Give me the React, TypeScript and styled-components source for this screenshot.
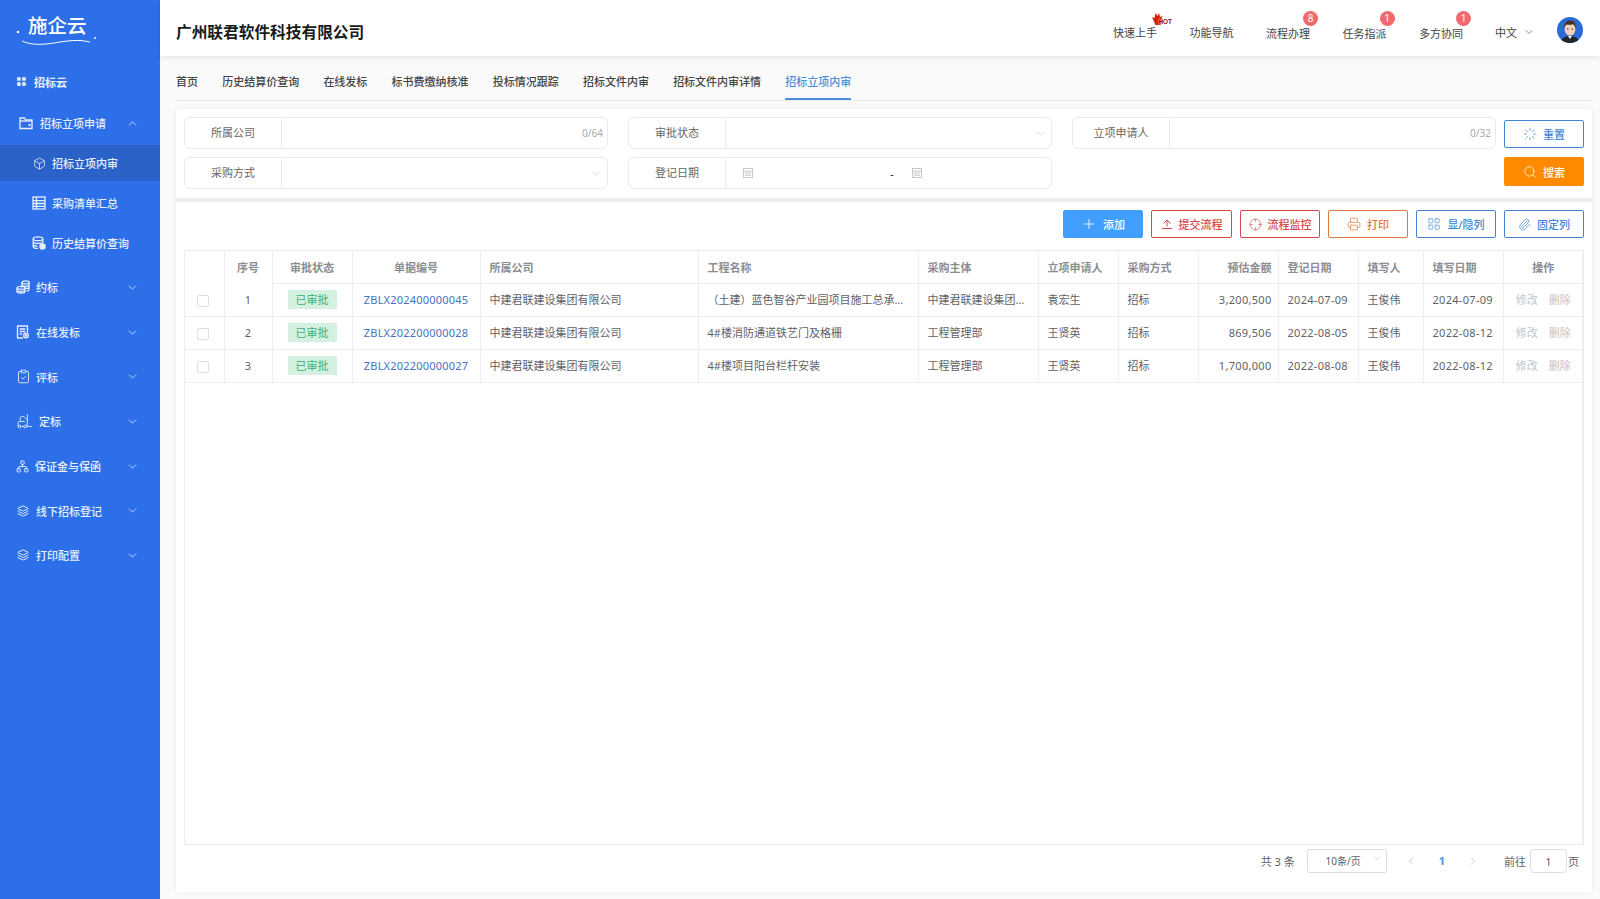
import * as React from 'react'
import styled, { createGlobalStyle } from 'styled-components'
import {
  Box,
  ChevronDown,
  ChevronLeft,
  ChevronRight,
  ChevronUp,
  ClipboardCheck,
  Crosshair,
  Forklift,
  Layers,
  LayoutGrid,
  Loader,
  Network,
  Paperclip,
  Plus,
  Printer,
  Search,
} from 'lucide-react'

const fontStack = `"Noto Sans", "Noto Sans CJK SC", sans-serif`

const GlobalStyle = createGlobalStyle`
  html, body {
    margin: 0;
    padding: 0;
    height: 100%;
    overflow: hidden;
    background: #fafafa;
    font-family: ${fontStack};
    font-size: 11px;
  }
  * { box-sizing: border-box; }
`

const Page = styled.div`
  display: flex;
  width: 1600px;
  height: 899px;
`

/* sidebar */

const Sidebar = styled.aside`
  flex: 0 0 160px;
  background: #2c6fe8;
  color: #e9f0fd;
`

const LogoBox = styled.div`
  height: 60px;
  padding: 14px 0 0 15px;
`

const MenuRow = styled.div<{ $height: number; $pad: number; $gap: number; $active?: boolean; $bold?: boolean }>`
  display: flex;
  align-items: center;
  height: ${p => p.$height}px;
  padding-left: ${p => p.$pad}px;
  padding-right: 21px;
  gap: ${p => p.$gap}px;
  font-weight: ${p => (p.$bold ? 700 : 500)};
  background: ${p => (p.$active ? '#2a62c8' : 'transparent')};
`

const ActiveWrap = styled.div`
  height: 40px;
  padding: 2px 0;
`

const MenuText = styled.span`
  flex: 1;
  white-space: nowrap;
`

const GroupList = styled.div`
  padding-top: 2px;
`

const stroke = { fill: 'none', stroke: 'currentColor', strokeWidth: 1.3 }

const GridIcon = () => <LayoutGrid size={11} fill="currentColor" strokeWidth={1} />

const FolderIcon = () => (
  <svg width="14" height="14" viewBox="0 0 14 14" {...stroke}>
    <path d="M1 12.5V2h4.5l1 1.8H13v8.7z" />
    <path d="M1 5h12" />
    <circle cx="10.5" cy="9" r=".5" fill="currentColor" />
  </svg>
)

const SheetIcon = () => (
  <svg width="14" height="14" viewBox="0 0 14 14" {...stroke}>
    <rect x="1" y="1" width="12" height="12" />
    <path d="M1 4.6h12M1 7.5h12M1 10.4h12M4.5 1v12" />
  </svg>
)

const DbCheckIcon = () => (
  <svg width="14" height="14" viewBox="0 0 14 14" {...stroke}>
    <ellipse cx="6" cy="2.8" rx="4.8" ry="1.9" />
    <path d="M1.2 2.8v7.6c0 1 2 1.9 4.6 1.9M1.2 5.5c0 1 2 1.9 4.8 1.9s4.8-.9 4.8-1.9M1.2 8.2c0 1 2 1.8 4.4 1.9M10.8 2.8v4" />
    <circle cx="10.5" cy="10.5" r="2.6" fill="currentColor" />
  </svg>
)

const CoinsIcon = () => (
  <svg width="14" height="14" viewBox="0 0 14 14" {...stroke}>
    <ellipse cx="9.5" cy="2.4" rx="3.6" ry="1.5" />
    <path d="M5.9 2.4v5M13.1 2.4v7c0 .8-1 1.4-2.4 1.5M5.9 4.8c0 .8 1.6 1.5 3.6 1.5s3.6-.7 3.6-1.5M9 8.5c2 0 4.1-.5 4.1-1.5" />
    <ellipse cx="5" cy="7.8" rx="4" ry="1.5" />
    <path d="M1 7.8v3.6c0 .9 1.8 1.6 4 1.6s4-.7 4-1.6V7.8M1 9.7c0 .9 1.8 1.6 4 1.6s4-.7 4-1.6" />
  </svg>
)

const DocIcon = () => (
  <svg width="14" height="14" viewBox="0 0 14 14" {...stroke}>
    <path d="M7 13H1.5V1h10v6.5" />
    <path d="M3.7 4h5.6M3.7 6.5h5.6M3.7 9H6" />
    <circle cx="10" cy="10.5" r="2.3" />
    <circle cx="10" cy="10.5" r=".6" fill="currentColor" />
  </svg>
)

interface IMenuGroup {
  label: string
  icon: React.ReactNode
  gap?: number
  pad?: number
}

const menuGroups: IMenuGroup[] = [
  { label: '约标', icon: <CoinsIcon /> },
  { label: '在线发标', icon: <DocIcon /> },
  { label: '评标', icon: <ClipboardCheck size={15} strokeWidth={1.4} />, gap: 5 },
  { label: '定标', icon: <Forklift size={17} strokeWidth={1.2} />, gap: 6 },
  { label: '保证金与保函', icon: <Network size={13} strokeWidth={1.7} /> },
  { label: '线下招标登记', icon: <Layers size={12} strokeWidth={1.9} />, pad: 17, gap: 7 },
  { label: '打印配置', icon: <Layers size={12} strokeWidth={1.9} />, pad: 17, gap: 7 },
]

const LogoInner = styled.div`
  position: relative;
  width: 84px;
  padding-left: 13px;
`

const LogoText = styled.span`
  font-size: 19.5px;
  font-weight: 500;
  color: #fff;
  line-height: 24px;
`

const LogoSwoosh = styled.svg`
  position: absolute;
  left: 0;
  top: -8px;
`

const Logo = () => (
  <LogoInner>
    <LogoText>施企云</LogoText>
    <LogoSwoosh width="84" height="44" viewBox="0 0 84 44" fill="none">
      <circle cx="3" cy="26" r="1.3" fill="#fff" />
      <path d="M7 35c8 4 20 4 32 2s24-4 36-1" stroke="#fff" strokeWidth="1" />
      <circle cx="80" cy="32" r="1" fill="#fff" />
    </LogoSwoosh>
  </LogoInner>
)

const SideMenu = () => (
  <Sidebar>
    <LogoBox>
      <Logo />
    </LogoBox>
    <MenuRow $height={43} $pad={16} $gap={7} $bold>
      <GridIcon />
      <MenuText>招标云</MenuText>
    </MenuRow>
    <MenuRow $height={40} $pad={19} $gap={7}>
      <FolderIcon />
      <MenuText>招标立项申请</MenuText>
      <ChevronUp size={13} strokeWidth={1.4} />
    </MenuRow>
    <ActiveWrap>
      <MenuRow $height={36} $pad={33} $gap={6} $active>
        <Box size={13} strokeWidth={1.4} />
        <MenuText>招标立项内审</MenuText>
      </MenuRow>
    </ActiveWrap>
    <MenuRow $height={40} $pad={32} $gap={6}>
      <SheetIcon />
      <MenuText>采购清单汇总</MenuText>
    </MenuRow>
    <MenuRow $height={40} $pad={32} $gap={6}>
      <DbCheckIcon />
      <MenuText>历史结算价查询</MenuText>
    </MenuRow>
    <GroupList>
      {menuGroups.map(group => (
        <MenuRow key={group.label} $height={44.7} $pad={group.pad ?? 16} $gap={group.gap ?? 6}>
          {group.icon}
          <MenuText>{group.label}</MenuText>
          <ChevronDown size={13} strokeWidth={1.4} />
        </MenuRow>
      ))}
    </GroupList>
  </Sidebar>
)

/* header */

const Main = styled.div`
  flex: 1;
  display: flex;
  flex-direction: column;
  min-width: 0;
`

const Header = styled.header`
  display: flex;
  align-items: center;
  height: 56px;
  padding: 6px 17px 0 16px;
  background: #fff;
  box-shadow: 0 1px 6px rgba(0, 0, 0, 0.1);
`

const CompanyName = styled.h1`
  flex: 1;
  margin: 0;
  font-size: 15.7px;
  font-weight: 700;
  color: #1a1a1a;
`

const NavList = styled.nav`
  display: flex;
  align-items: center;
  gap: 32.5px;
  margin: 3px 32px 0 0;
`

const NavItem = styled.span<{ $low?: boolean }>`
  position: relative;
  color: #444;
  white-space: nowrap;
  line-height: 16px;
  margin-top: ${p => (p.$low ? 2 : 0)}px;
`

const Badge = styled.i`
  position: absolute;
  right: -8px;
  top: -15px;
  width: 15px;
  height: 15px;
  border-radius: 50%;
  background: #f0696e;
  color: #fff;
  font-style: normal;
  font-size: 10px;
  line-height: 15px;
  text-align: center;
`

const HotMark = styled.svg`
  position: absolute;
  right: -18px;
  top: -13px;
`

const HotText = styled.text`
  font-family: "Liberation Sans", sans-serif;
  font-size: 6.4px;
  font-weight: 700;
  fill: #9c0d06;
  stroke: #fff;
  stroke-width: 0.5px;
  paint-order: stroke;
`

const LangBox = styled.div`
  display: flex;
  align-items: center;
  gap: 6px;
  margin: 2px 22px 0 0;
  color: #444;
`

const AvatarIcon = styled.svg`
  margin-top: -3px;
`

const Avatar = () => (
  <AvatarIcon width="26" height="26" viewBox="0 0 26 26">
    <defs>
      <clipPath id="av">
        <circle cx="13" cy="13" r="13" />
      </clipPath>
    </defs>
    <g clipPath="url(#av)">
      <rect width="26" height="26" fill="#2a6bd6" />
      <path d="M4 26c0-5 4-7 9-7s9 2 9 7z" fill="#22262e" />
      <path d="M11 19h4l-2 3z" fill="#fff" />
      <ellipse cx="13" cy="12" rx="5.4" ry="6.6" fill="#f3d3b6" />
      <path d="M7.4 11C6.6 5.5 10 3.6 13.4 3.6c3.5 0 5.8 2.4 5 7.4-.6-2-1.4-3.4-2.4-3.8-2 .8-5 .8-6.4.2-1 1-1.8 2-2.2 3.6z" fill="#4a3325" />
      <circle cx="10.8" cy="12" r=".7" fill="#333" />
      <circle cx="15.2" cy="12" r=".7" fill="#333" />
    </g>
  </AvatarIcon>
)

const TopBar = () => (
  <Header>
    <CompanyName>广州联君软件科技有限公司</CompanyName>
    <NavList>
      <NavItem>
        快速上手
        <HotMark width="23" height="14" viewBox="0 0 23 14">
          <path d="M0 5l2.5 1 1-5 2 3 1.5-3 1 4 2.500-1-1 3 1 1-2 5H3.500z" fill="#d81e06" />
          <HotText x="6.500" y="12">HOT</HotText>
        </HotMark>
      </NavItem>
      <NavItem>功能导航</NavItem>
      <NavItem $low>
        流程办理
        <Badge>8</Badge>
      </NavItem>
      <NavItem $low>
        任务指派
        <Badge>1</Badge>
      </NavItem>
      <NavItem $low>
        多方协同
        <Badge>1</Badge>
      </NavItem>
    </NavList>
    <LangBox>
      中文
      <ChevronDown size={12} strokeWidth={1.2} />
    </LangBox>
    <Avatar />
  </Header>
)

/* tabs */

const Tabs = styled.div`
  display: flex;
  gap: 24.2px;
  height: 45px;
  margin: 0 8px 8px 16px;
  padding-top: 17px;
  border-bottom: 1px solid #e9e9e9;
`

const Tab = styled.span<{ $active?: boolean }>`
  height: 27px;
  line-height: 18px;
  white-space: nowrap;
  font-weight: 500;
  color: ${p => (p.$active ? '#4a90d9' : '#444')};
  border-bottom: 2px solid ${p => (p.$active ? '#4a90d9' : 'transparent')};
`

const tabNames = [
  '首页',
  '历史结算价查询',
  '在线发标',
  '标书费缴纳核准',
  '投标情况跟踪',
  '招标文件内审',
  '招标文件内审详情',
  '招标立项内审',
]

/* search form */

const Content = styled.div`
  flex: 1;
  display: flex;
  flex-direction: column;
  gap: 4px;
  margin: 0 8px 7px 16px;
  background: #ededed;
  min-height: 0;
  box-shadow: 0 0 6px rgba(0, 0, 0, 0.06);
`

const FilterCard = styled.section`
  display: flex;
  gap: 8px;
  height: 89px;
  padding: 8px;
  background: #fff;
`

const FieldGrid = styled.div`
  flex: 1;
  display: grid;
  grid-template-columns: repeat(3, 1fr);
  grid-auto-rows: 32px;
  gap: 8px 20px;
`

const Field = styled.div`
  display: flex;
  align-items: center;
  border: 1px solid #e8eaee;
  border-radius: 6px;
  background: #fff;
`

const FieldLabel = styled.label`
  display: flex;
  align-items: center;
  justify-content: center;
  flex: 0 0 97px;
  height: 28px;
  padding-bottom: 2px;
  border-right: 1px solid #e8eaee;
  color: #666;
`

const FieldBody = styled.div`
  flex: 1;
  display: flex;
  align-items: center;
  justify-content: flex-end;
  padding-right: 4px;
  font-size: 10px;
  color: #aaa;
`

const DateBody = styled.div`
  flex: 1;
  display: flex;
  align-items: center;
  color: #c4c7cc;
`

const DateSlot = styled.span<{ $width: number; $pad: number }>`
  display: flex;
  width: ${p => p.$width}px;
  padding-left: ${p => p.$pad}px;
`

const DateDash = styled.span`
  width: 12px;
  text-align: center;
  color: #222;
`

const CalendarIcon = () => (
  <svg width="10" height="10" viewBox="0 0 10 10" fill="none" stroke="currentColor">
    <rect x=".5" y=".5" width="9" height="9" />
    <path d="M.5 3.2h9M2 5.2h6M2 7.3h6" />
  </svg>
)

const ButtonColumn = styled.div`
  flex: 0 0 80px;
  display: flex;
  flex-direction: column;
  gap: 9px;
  padding-top: 3px;
`

const Btn = styled.button<{ $color: string; $solid?: boolean; $height?: number; $width?: number }>`
  display: flex;
  align-items: center;
  justify-content: center;
  gap: 6px;
  width: ${p => p.$width ?? 80}px;
  height: ${p => p.$height ?? 28}px;
  padding: 0;
  border: 1px solid ${p => p.$color};
  border-radius: 2px;
  background: ${p => (p.$solid ? p.$color : '#fff')};
  color: ${p => (p.$solid ? '#fff' : p.$color)};
  font-family: ${fontStack};
  font-size: 11px;
  font-weight: 500;
  white-space: nowrap;
`

const FilterBar = () => (
  <FilterCard>
    <FieldGrid>
      <Field>
        <FieldLabel>所属公司</FieldLabel>
        <FieldBody>0/64</FieldBody>
      </Field>
      <Field>
        <FieldLabel>审批状态</FieldLabel>
        <FieldBody>
          <ChevronDown size={13} strokeWidth={1.2} color="#c0c4cc" />
        </FieldBody>
      </Field>
      <Field>
        <FieldLabel>立项申请人</FieldLabel>
        <FieldBody>0/32</FieldBody>
      </Field>
      <Field>
        <FieldLabel>采购方式</FieldLabel>
        <FieldBody>
          <ChevronDown size={13} strokeWidth={1.2} color="#c0c4cc" />
        </FieldBody>
      </Field>
      <Field>
        <FieldLabel>登记日期</FieldLabel>
        <DateBody>
          <DateSlot $width={160} $pad={17}>
            <CalendarIcon />
          </DateSlot>
          <DateDash>-</DateDash>
          <DateSlot $width={100} $pad={14}>
            <CalendarIcon />
          </DateSlot>
        </DateBody>
      </Field>
    </FieldGrid>
    <ButtonColumn>
      <Btn $color="#3f86d6">
        <Loader size={14} strokeWidth={1.2} />
        重置
      </Btn>
      <Btn $color="#ff8a00" $solid $height={29}>
        <Search size={14} strokeWidth={1.3} />
        搜索
      </Btn>
    </ButtonColumn>
  </FilterCard>
)

/* table */

const TableCard = styled.section`
  flex: 1;
  display: flex;
  flex-direction: column;
  padding: 8px 8px 0;
  background: #fff;
  min-height: 0;
`

const Toolbar = styled.div`
  display: flex;
  justify-content: flex-end;
  gap: 8px;
  margin-bottom: 12px;
`

const TableFrame = styled.div`
  flex: 1;
  border: 1px solid #ebeef5;
  border-right-width: 2px;
  min-height: 0;
`

const Table = styled.table`
  width: 100%;
  table-layout: fixed;
  border-collapse: collapse;
  color: #606266;
`

type Align = 'left' | 'center' | 'right'

const Th = styled.th<{ $align: Align; $open?: boolean }>`
  height: 32px;
  padding: 0 ${p => (p.$align === 'right' ? 6 : 8)}px 0 ${p => (p.$align === 'left' ? 9 : 8)}px;
  text-align: ${p => p.$align};
  font-weight: 700;
  color: #8a8d93;
  border-right: 1px solid #ebeef5;
  border-bottom: 1px solid ${p => (p.$open ? 'transparent' : '#ebeef5')};
  white-space: nowrap;
  &:last-child {
    border-right: 0;
  }
`

const Td = styled.td<{ $align: Align; $latin?: boolean }>`
  height: 33px;
  padding: 0 ${p => (p.$align === 'right' ? 6 : 8)}px 1px ${p => (p.$align === 'left' ? 9 : 8)}px;
  text-align: ${p => p.$align};
  letter-spacing: ${p => (p.$latin ? '0.3px' : 0)};
  border-right: 1px solid #ebeef5;
  border-bottom: 1px solid #ebeef5;
  white-space: nowrap;
  overflow: hidden;
  &:last-child {
    border-right: 0;
  }
`

const CheckBox = styled.span`
  display: inline-block;
  width: 12px;
  height: 12px;
  margin: 2px 2px 0 0;
  vertical-align: middle;
  border: 1px solid #dcdfe6;
  border-radius: 2px;
  background: #fff;
`

const StatusTag = styled.span`
  display: inline-block;
  width: 49px;
  height: 19px;
  line-height: 19px;
  text-align: center;
  background: #d3f0e0;
  color: #3bb273;
`

const DocLink = styled.a`
  color: #4472c4;
  letter-spacing: 0.2px;
`

const ActionLink = styled.span`
  color: #c0c4cc;
  & + & {
    margin-left: 11px;
  }
`

const columns: { title: string; width: number; align: Align; latin?: boolean }[] = [
  { title: '', width: 39, align: 'center' },
  { title: '序号', width: 48, align: 'center' },
  { title: '审批状态', width: 80, align: 'center' },
  { title: '单据编号', width: 128, align: 'center' },
  { title: '所属公司', width: 218, align: 'left' },
  { title: '工程名称', width: 220, align: 'left' },
  { title: '采购主体', width: 120, align: 'left' },
  { title: '立项申请人', width: 80, align: 'left' },
  { title: '采购方式', width: 80, align: 'left' },
  { title: '预估金额', width: 80, align: 'right', latin: true },
  { title: '登记日期', width: 80, align: 'left', latin: true },
  { title: '填写人', width: 65, align: 'left' },
  { title: '填写日期', width: 80, align: 'left', latin: true },
  { title: '操作', width: 80, align: 'center' },
]

const rows = [
  ['ZBLX202400000045', '中建君联建设集团有限公司', '（土建）蓝色智谷产业园项目施工总承…', '中建君联建设集团…', '袁宏生', '招标', '3,200,500', '2024-07-09', '王俊伟', '2024-07-09'],
  ['ZBLX202200000028', '中建君联建设集团有限公司', '4#楼消防通道铁艺门及格栅', '工程管理部', '王贤英', '招标', '869,506', '2022-08-05', '王俊伟', '2022-08-12'],
  ['ZBLX202200000027', '中建君联建设集团有限公司', '4#楼项目阳台栏杆安装', '工程管理部', '王贤英', '招标', '1,700,000', '2022-08-08', '王俊伟', '2022-08-12'],
]

const DataTable = () => (
  <TableFrame>
    <Table>
      <colgroup>
        {columns.map((col, i) => (
          <col key={i} width={col.width} />
        ))}
      </colgroup>
      <thead>
        <tr>
          {columns.map((col, i) => (
            <Th key={i} $align={col.align} $open={i < 2}>
              {col.title}
            </Th>
          ))}
        </tr>
      </thead>
      <tbody>
        {rows.map((row, index) => (
          <tr key={row[0]}>
            <Td $align="center">
              <CheckBox />
            </Td>
            <Td $align="center">{index + 1}</Td>
            <Td $align="center">
              <StatusTag>已审批</StatusTag>
            </Td>
            <Td $align="center">
              <DocLink>{row[0]}</DocLink>
            </Td>
            {row.slice(1).map((value, i) => (
              <Td key={i} $align={columns[i + 4].align} $latin={columns[i + 4].latin}>
                {value}
              </Td>
            ))}
            <Td $align="center">
              <ActionLink>修改</ActionLink>
              <ActionLink>删除</ActionLink>
            </Td>
          </tr>
        ))}
      </tbody>
    </Table>
  </TableFrame>
)

/* pagination */

const Pager = styled.div`
  display: flex;
  align-items: center;
  justify-content: flex-end;
  height: 47px;
  padding: 0 5px 16px 0;
  color: #606266;
`

const PagerSelect = styled.div`
  display: flex;
  align-items: center;
  justify-content: flex-end;
  gap: 10px;
  width: 80px;
  height: 24px;
  margin: 0 18px 0 12px;
  padding-right: 3px;
  border: 1px solid #dcdfe6;
  border-radius: 2px;
  font-size: 10px;
  & > svg {
    margin-top: -5px;
  }
`

const PagerNum = styled.span`
  margin: 0 22px;
  color: #4a90d9;
  font-weight: 700;
`

const PagerInput = styled.div`
  width: 37px;
  height: 24px;
  margin: 0 1px 0 4px;
  line-height: 24px;
  text-align: center;
  border: 1px solid #dcdfe6;
  border-radius: 4px;
`

const PagerJump = styled.span`
  margin-left: 25px;
`

const Pagination = () => (
  <Pager>
    <span>共 3 条</span>
    <PagerSelect>
      10条/页
      <ChevronDown size={12} strokeWidth={1.2} color="#c0c4cc" />
    </PagerSelect>
    <ChevronLeft size={12} strokeWidth={1.4} color="#b0b4bb" />
    <PagerNum>1</PagerNum>
    <ChevronRight size={12} strokeWidth={1.4} color="#b0b4bb" />
    <PagerJump>前往</PagerJump>
    <PagerInput>1</PagerInput>
    <span>页</span>
  </Pager>
)

const UploadIcon = () => (
  <svg width="12" height="12" viewBox="0 0 12 12" fill="none" stroke="currentColor">
    <path d="M2.5 5.5L6 2l3.5 3.5M6 2v6.5M1 10.5h10" />
  </svg>
)

const App: React.FC = () => (
  <Page>
    <GlobalStyle />
    <SideMenu />
    <Main>
      <TopBar />
      <Tabs>
        {tabNames.map(name => (
          <Tab key={name} $active={name === '招标立项内审'}>
            {name}
          </Tab>
        ))}
      </Tabs>
      <Content>
        <FilterBar />
        <TableCard>
          <Toolbar>
            <Btn $color="#409eff" $solid>
              <Plus size={16} strokeWidth={1.3} />
              添加
            </Btn>
            <Btn $color="#d9484a" $width={81}>
              <UploadIcon />
              提交流程
            </Btn>
            <Btn $color="#d9484a">
              <Crosshair size={13} strokeWidth={1.2} />
              流程监控
            </Btn>
            <Btn $color="#e0773a">
              <Printer size={14} strokeWidth={1.2} />
              打印
            </Btn>
            <Btn $color="#3f86d6">
              <LayoutGrid size={14} strokeWidth={1.1} />
              显/隐列
            </Btn>
            <Btn $color="#3f86d6">
              <Paperclip size={13} strokeWidth={1.3} />
              固定列
            </Btn>
          </Toolbar>
          <DataTable />
          <Pagination />
        </TableCard>
      </Content>
    </Main>
  </Page>
)

export default App
